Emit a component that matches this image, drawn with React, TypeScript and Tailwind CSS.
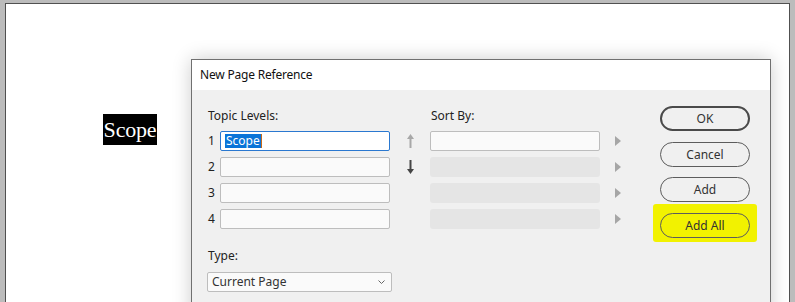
import React from "react";

const font = { fontFamily: '"Noto Sans", "Open Sans", sans-serif' };

function UpArrow({ color }: { color: string }) {
  return (
    <svg width="7" height="14" viewBox="0 0 7 14">
      <polygon points="3.5,0 7,5 0,5" fill={color} />
      <rect x="2.5" y="4" width="2" height="10" fill={color} />
    </svg>
  );
}

function DownArrow({ color }: { color: string }) {
  return (
    <svg width="7" height="14" viewBox="0 0 7 14">
      <rect x="2.5" y="0" width="2" height="10" fill={color} />
      <polygon points="0,9 7,9 3.5,14" fill={color} />
    </svg>
  );
}

function Tri() {
  return (
    <svg width="6" height="10" viewBox="0 0 6 10">
      <polygon points="0,0 6,5 0,10" fill="#a6a6a6" />
    </svg>
  );
}

function Btn({ label, primary }: { label: string; primary?: boolean }) {
  return (
    <div
      className={
        "w-[90px] h-[25px] rounded-full flex items-center justify-center text-[12px] text-[#333] " +
        (primary ? "border-2 border-[#4a4a4a]" : "border border-[#5c5c5c]")
      }
    >
      {label}
    </div>
  );
}

export default function App() {
  return (
    <div className="relative w-[795px] h-[302px] overflow-hidden bg-[#bcbcbc]" style={font}>
      <div className="ml-[5px] mt-[3px] w-[785px] h-[299px] bg-white border-l border-t border-r border-[#505050]" />

      <div className="absolute left-[103px] top-[114px] w-[54px] h-[31px] bg-black flex items-center justify-center">
        <span className="text-white text-[22px] leading-none tracking-[-0.2px]" style={{ fontFamily: '"Liberation Serif", serif' }}>
          Scope
        </span>
      </div>

      <div className="absolute left-[191px] top-[59px] w-[580px] h-[260px] border border-[#707070] bg-[#f0f0f0] shadow-[0_0_18px_rgba(0,0,0,0.2)]">
        <div className="h-[30px] bg-white flex items-center pl-[8px] text-[12px] tracking-[-0.2px] text-[#111]">New Page Reference</div>

        <div className="flex pt-[18px] pl-[15px]">
          {/* Left column */}
          <div className="w-[185px] flex flex-col">
            <div className="ml-[1px] h-[16px] leading-[16px] text-[12px] text-[#222]">Topic Levels:</div>
            <div className="mt-[7px] flex flex-col gap-[6px]">
              {[1, 2, 3, 4].map((n) => (
                <div key={n} className="flex items-center h-[20px]">
                  <div className="w-[13px] pl-[1px] text-[12px] text-[#222]">{n}</div>
                  <div
                    className={
                      "w-[170px] h-[20px] rounded-[2px] border flex items-center " +
                      (n === 1 ? "border-[#2a78d0] bg-white" : "border-[#bdbdbd] bg-[#fafafa]")
                    }
                  >
                    {n === 1 && (
                      <div className="ml-[4px] flex items-center">
                        <span className="bg-[#0a74d8] text-white text-[12px] leading-[14px] px-[1px]">Scope</span>
                        <span className="w-[1px] h-[14px] bg-[#c86a1a]" />
                      </div>
                    )}
                  </div>
                </div>
              ))}
            </div>
            <div className="mt-[19px] ml-[1px] h-[16px] leading-[16px] text-[12px] text-[#222]">Type:</div>
            <div className="mt-[8px] w-[185px] h-[20px] rounded-[2px] border border-[#bdbdbd] bg-[#fafafa] flex items-center justify-between pl-[4px] pr-[6px]">
              <span className="text-[12px] text-[#333]">Current Page</span>
              <svg width="7" height="4" viewBox="0 0 7 4">
                <polyline points="0.5,0.5 3.5,3.5 6.5,0.5" fill="none" stroke="#666" strokeWidth="1" />
              </svg>
            </div>
          </div>

          {/* Arrow column */}
          <div className="w-[38px] flex flex-col items-start pl-[15px]">
            <div className="h-[16px]" />
            <div className="mt-[7px] flex flex-col gap-[6px]">
              <div className="h-[20px] flex items-center">
                <UpArrow color="#a8a8a8" />
              </div>
              <div className="h-[20px] flex items-center">
                <DownArrow color="#454545" />
              </div>
            </div>
          </div>

          {/* Sort column */}
          <div className="w-[170px] flex flex-col">
            <div className="ml-[1px] h-[16px] leading-[16px] text-[12px] text-[#222]">Sort By:</div>
            <div className="mt-[7px] flex flex-col gap-[6px]">
              <div className="h-[20px] rounded-[2px] border border-[#bdbdbd] bg-[#fafafa]" />
              <div className="h-[20px] rounded-[3px] bg-[#e5e5e5]" />
              <div className="h-[20px] rounded-[3px] bg-[#e5e5e5]" />
              <div className="h-[20px] rounded-[3px] bg-[#e5e5e5]" />
            </div>
          </div>

          {/* Triangle column */}
          <div className="w-[60px] flex flex-col pl-[15px]">
            <div className="h-[16px]" />
            <div className="mt-[7px] flex flex-col gap-[6px]">
              {[0, 1, 2, 3].map((i) => (
                <div key={i} className="h-[20px] flex items-center">
                  <Tri />
                </div>
              ))}
            </div>
          </div>

          {/* Buttons */}
          <div className="-mt-[2px] flex flex-col w-[90px]">
            <Btn label="OK" primary />
            <div className="mt-[11px]">
              <Btn label="Cancel" />
            </div>
            <div className="mt-[10px]">
              <Btn label="Add" />
            </div>
            <div className="mt-[2px] -mx-[7px] px-[7px] pt-[9px] pb-[4px] bg-[#f2f200] rounded-[3px]">
              <Btn label="Add All" />
            </div>
          </div>
        </div>
      </div>
    </div>
  );
}
